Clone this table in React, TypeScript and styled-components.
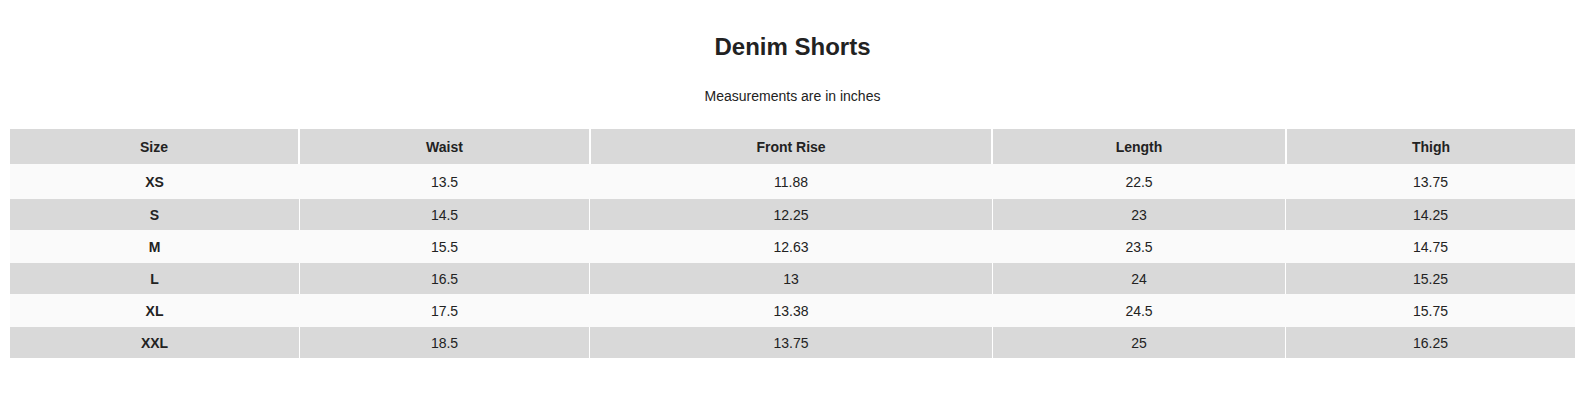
import React from "react";
import styled, { createGlobalStyle } from "styled-components";

const GlobalStyle = createGlobalStyle`
  html, body {
    margin: 0;
    padding: 0;
    background: #ffffff;
  }
  body {
    font-family: "Liberation Sans", Arial, Helvetica, sans-serif;
    color: #222222;
  }
`;

const Page = styled.main`
  display: flex;
  flex-direction: column;
  align-items: center;
  padding: 33px 8px 0 10px;
`;

const Title = styled.h1`
  margin: 0 0 27px;
  font-size: 24px;
  line-height: 28px;
  font-weight: 700;
  color: #222222;
`;

const Note = styled.p`
  margin: 0 0 25px;
  font-size: 14px;
  line-height: 16px;
  color: #222222;
`;

const Chart = styled.div`
  align-self: stretch;
  display: flex;
  flex-direction: column;
  background: #ffffff;
`;

const Row = styled.div<{ $head?: boolean; $shade: boolean; $h: number }>`
  display: grid;
  grid-template-columns: ${(p) =>
    p.$head ? "288fr 289fr 400fr 292fr 288fr" : "289fr 289fr 402fr 292fr 289fr"};
  column-gap: ${(p) => (p.$head ? "2px" : "1px")};
  height: ${(p) => p.$h}px;
  background: ${(p) => (p.$shade ? "#ffffff" : "#fafafa")};
`;

const Cell = styled.div<{ $shade: boolean; $bold?: boolean }>`
  display: flex;
  align-items: center;
  justify-content: center;
  background: ${(p) => (p.$shade ? "#d9d9d9" : "#fafafa")};
  font-size: 14px;
  line-height: 16px;
  font-weight: ${(p) => (p.$bold ? 700 : 400)};
  color: #222222;
`;

const headers = ["Size", "Waist", "Front Rise", "Length", "Thigh"];

const rows: { size: string; values: string[]; h: number }[] = [
  { size: "XS", values: ["13.5", "11.88", "22.5", "13.75"], h: 35 },
  { size: "S", values: ["14.5", "12.25", "23", "14.25"], h: 31 },
  { size: "M", values: ["15.5", "12.63", "23.5", "14.75"], h: 33 },
  { size: "L", values: ["16.5", "13", "24", "15.25"], h: 31 },
  { size: "XL", values: ["17.5", "13.38", "24.5", "15.75"], h: 33 },
  { size: "XXL", values: ["18.5", "13.75", "25", "16.25"], h: 31 },
];

export default function App() {
  return (
    <>
      <GlobalStyle />
      <Page>
        <Title>Denim Shorts</Title>
        <Note>Measurements are in inches</Note>
        <Chart>
          <Row $head $shade $h={35}>
            {headers.map((h) => (
              <Cell key={h} $shade $bold>
                {h}
              </Cell>
            ))}
          </Row>
          {rows.map((r, i) => {
            const shade = i % 2 === 1;
            return (
              <Row key={r.size} $shade={shade} $h={r.h}>
                <Cell $shade={shade} $bold>
                  {r.size}
                </Cell>
                {r.values.map((v, j) => (
                  <Cell key={j} $shade={shade}>
                    {v}
                  </Cell>
                ))}
              </Row>
            );
          })}
        </Chart>
      </Page>
    </>
  );
}
